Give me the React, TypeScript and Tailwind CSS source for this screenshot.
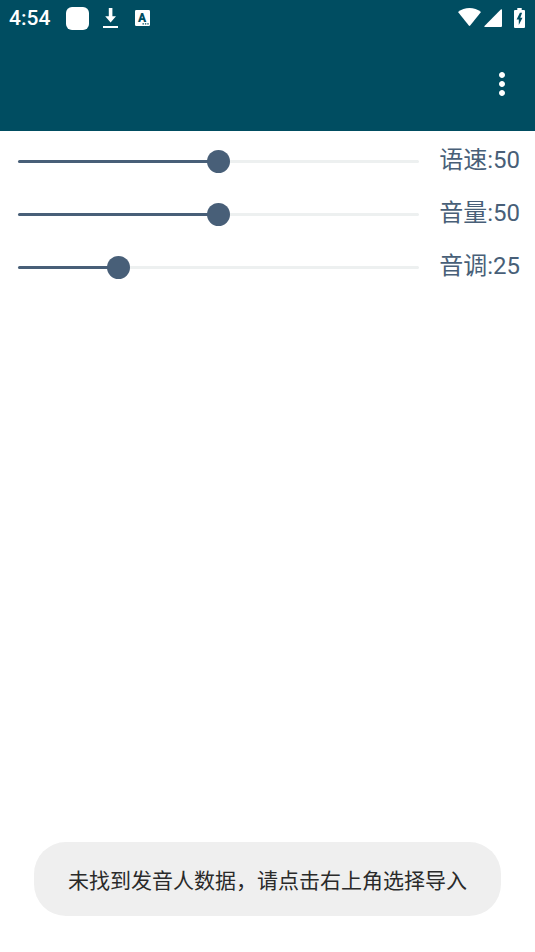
import { useState } from "react";
import { MdMoreVert } from "react-icons/md";

interface SliderRowProps {
    id: string;
    label: string;
    initial: number;
}

const StatusBar = () => {
    return (
        <div className="flex h-9 items-center justify-between pl-[9px] pr-[10px] text-white">
            <div className="flex items-center">
                <span className="w-[57px] text-[21px] leading-9 font-medium">4:54</span>
                <span className="size-[23px] rounded-md bg-white" />
                <svg className="ml-[14px]" width="15" height="20" viewBox="0 0 15 20" fill="currentColor">
                    <path d="M5.800 0h3.600v8.200H13L7.600 14.400 2.200 8.200h3.600z" />
                    <path d="M0 18h15v2H0z" />
                </svg>
                <svg className="ml-[17px]" width="15" height="16" viewBox="0 0 15 16">
                    <rect width="15" height="16" rx="1.2" fill="currentColor" />
                    <text x="7.2" y="11.5" textAnchor="middle" fontSize="12" fontWeight="900" fill="#004d61">A</text>
                    <path d="M7.5 13.2h1.4v1.2H7.5zM9.9 13.2h1.4v1.2H9.9zM12.3 13.2h1.4v1.2h-1.4z" fill="#004d61" />
                </svg>
            </div>
            <div className="flex items-center">
                <svg width="23" height="20" viewBox="0 0 23 20" fill="currentColor">
                    <path d="M0 3.9C6.6-1.3 16.4-1.3 23 3.9L12.2 17.5q-.7.8-1.4 0z" />
                </svg>
                <svg className="ml-[3px]" width="18" height="18" viewBox="0 0 18 18" fill="currentColor">
                    <path d="M18 1v16q0 1-1 1H1q-1.2-.2-.5-1L16.8.5Q18-.3 18 1z" />
                </svg>
                <svg className="ml-3" width="11" height="20" viewBox="0 0 11 20">
                    <path d="M3.3 0h4.4v2H10q1 0 1 1v16q0 1-1 1H1q-1 0-1-1V3q0-1 1-1h2.3z" fill="currentColor" />
                    <path d="M5.9 4.8L2.6 11.6h2.2v5.4l3.7-7.2H6.3l1.8-5z" fill="#004d61" />
                </svg>
            </div>
        </div>
    );
};

const SliderRow = ({ id, label, initial }: SliderRowProps) => {
    const [value, setValue] = useState(initial);

    return (
        <div className="flex h-[53px] items-center gap-2 pl-[6px] pr-[15px]">
            <div className="relative flex h-6 flex-1 items-center">
                <div className="absolute inset-x-3 h-[3px] rounded-full bg-[#edf0f0]">
                    <div className="h-full rounded-full bg-[#485f78]" style={{ width: `${value}%` }} />
                </div>
                <input
                    id={id}
                    type="range"
                    min={0}
                    max={100}
                    value={value}
                    onChange={(e) => setValue(Number(e.target.value))}
                    className="relative h-6 w-full cursor-pointer appearance-none bg-transparent [&::-webkit-slider-thumb]:size-[23px] [&::-webkit-slider-thumb]:appearance-none [&::-webkit-slider-thumb]:rounded-full [&::-webkit-slider-thumb]:bg-[#485f78]"
                />
            </div>
            <label htmlFor={id} className="pb-1 text-2xl whitespace-nowrap text-[#485f78]">
                {label}:{value}
            </label>
        </div>
    );
};

const App = () => {
    return (
        <div className="min-h-screen bg-white font-[Roboto,'Noto_Sans_CJK_SC',sans-serif]">
            <header className="bg-[#004d61]">
                <StatusBar />
                <div className="flex h-[95px] items-center justify-end pr-[15px]">
                    <button type="button" aria-label="更多选项" className="text-white">
                        <MdMoreVert size={36} />
                    </button>
                </div>
            </header>

            <main className="pt-1">
                <SliderRow id="speed" label="语速" initial={50} />
                <SliderRow id="volume" label="音量" initial={50} />
                <SliderRow id="pitch" label="音调" initial={25} />
            </main>

            <div className="pointer-events-none fixed inset-x-0 bottom-9 flex justify-center">
                <div role="status" className="rounded-[32px] bg-[#efefef] px-[34px] pt-6 pb-5 text-[21px] leading-[30px] text-[#2a2a2a]">
                    未找到发音人数据，请点击右上角选择导入
                </div>
            </div>
        </div>
    );
};

export default App;
